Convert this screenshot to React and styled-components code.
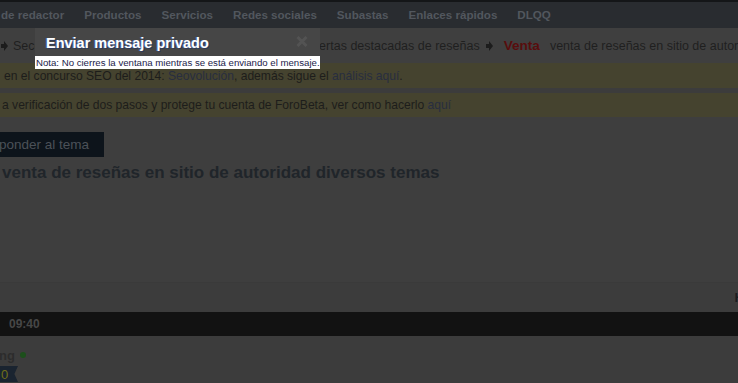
import React from "react";
import styled, { createGlobalStyle } from "styled-components";

const GlobalStyle = createGlobalStyle`
  html, body { margin: 0; padding: 0; }
  body {
    background: #3c3c3c;
    overflow: hidden;
    font-family: "Liberation Sans", Arial, sans-serif;
    width: 738px;
    height: 383px;
  }
`;

const Page = styled.div`
  position: relative;
  width: 738px;
  height: 383px;
  overflow: hidden;
  display: flex;
  flex-direction: column;
  background: #3c3c3c;
`;

const TopStrip = styled.div`
  height: 2px;
  background: #141618;
`;

const Nav = styled.nav`
  height: 26px;
  background: #292c30;
  display: flex;
  align-items: center;
  gap: 20px;
  padding-bottom: 1px;
  padding-left: 1px;
  box-sizing: border-box;
`;

const NavItem = styled.span`
  font-size: 11.6px;
  font-weight: bold;
  color: #52575e;
  white-space: nowrap;
`;

const Breadcrumb = styled.div`
  height: 35px;
  background: #3f3f3f;
  display: flex;
  align-items: center;
  padding-left: 1px;
  white-space: nowrap;
  font-size: 12.5px;
  color: #1f1f1f;
`;

const Crumb = styled.span`
  color: #1f1f1f;
`;

const Sep = styled.svg`
  width: 7px;
  height: 10px;
  margin: 0 ${(p) => p.$right ?? 7}px 0 ${(p) => p.$left ?? 6}px;
  flex: none;
`;

const Current = styled.strong`
  font-size: 13.6px;
  color: #580d0d;
  margin-right: 10px;
`;

const Notice = styled.div`
  height: ${(p) => p.$h}px;
  margin-top: ${(p) => p.$gap || 0}px;
  background: #45432f;
  display: flex;
  align-items: center;
  padding-left: ${(p) => p.$indent}px;
  font-size: 12.1px;
  color: #1d1d1b;
  white-space: nowrap;
`;

const NoticeLink = styled.span`
  color: #282e3f;
`;

const Content = styled.div`
  height: 166px;
  padding-top: 15px;
  box-sizing: border-box;
  background: #3e3e3e;
  border-bottom: 1px solid #3a3a3a;
  display: flex;
  flex-direction: column;
  align-items: flex-start;
`;

const ReplyButton = styled.div`
  width: 105px;
  height: 25px;
  background: #0d141b;
  color: #4b5158;
  font-size: 13.5px;
  display: flex;
  align-items: center;
  box-sizing: border-box;
  margin-left: -1px;
`;

const ThreadTitle = styled.h1`
  margin: 6px 0 0 2px;
  font-size: 17px;
  line-height: 20px;
  font-weight: bold;
  color: #20252a;
  white-space: nowrap;
`;

const PagerRow = styled.div`
  height: 29px;
  display: flex;
  align-items: center;
  justify-content: flex-end;
  background: #3c3c3c;
  overflow: hidden;
`;

const PagerText = styled.span`
  font-size: 13px;
  font-weight: bold;
  color: #1b1d21;
  margin-right: -6px;
`;

const PostBar = styled.div`
  height: 24px;
  background: #121212;
  display: flex;
  align-items: center;
  padding-left: 9px;
`;

const PostTime = styled.span`
  font-size: 12px;
  font-weight: bold;
  color: #474747;
`;

const Author = styled.div`
  padding-top: 12px;
  display: flex;
  flex-direction: column;
  gap: 3px;
`;

const AuthorName = styled.div`
  display: flex;
  align-items: center;
  gap: 5px;
  font-size: 13px;
  font-weight: bold;
  color: #2c2c2c;
  height: 15px;
  margin-left: -1px;
`;

const OnlineDot = styled.span`
  width: 6px;
  height: 6px;
  border-radius: 50%;
  background: #1c4f1b;
  margin-top: -2px;
`;

const Badge = styled.div`
  width: 18px;
  height: 16px;
  background: #1a2430;
  color: #706f1a;
  font-size: 13px;
  display: flex;
  align-items: center;
  padding-left: 1px;
  box-sizing: border-box;
  clip-path: polygon(0 0, 100% 0, 80% 50%, 100% 100%, 0 100%);
`;

/* Modal lying over the dimmed page */
const Modal = styled.div`
  position: absolute;
  left: 35px;
  top: 28px;
  width: 285px;
  display: flex;
  flex-direction: column;
`;

const ModalHeader = styled.div`
  height: 28px;
  background: #464646;
  display: flex;
  align-items: center;
  justify-content: space-between;
  padding: 0 12px 0 11px;
`;

const ModalTitle = styled.span`
  font-size: 14.5px;
  font-weight: bold;
  color: #ffffff;
  text-shadow: -1px 0 0 #4d6aa8, 1px 1px 0 #2c3a5c;
  margin-top: 2px;
`;

const Close = styled.svg`
  width: 12px;
  height: 11px;
  margin-top: -2px;
`;

const ModalNote = styled.div`
  height: 13px;
  background: #ffffff;
  font-size: 9.65px;
  line-height: 13px;
  color: #1a1a4a;
  white-space: nowrap;
  padding-left: 1px;
  overflow: hidden;
`;

const Diamond = ({ left, right }) => (
  <Sep viewBox="0 0 7 10" $left={left} $right={right}>
    <path d="M0 3 L3 3 L3 0 L7 5 L3 10 L3 7 L0 7 Z" fill="#1c1c1c" />
  </Sep>
);

export default function App() {
  return (
    <>
      <GlobalStyle />
      <Page>
        <TopStrip />
        <Nav>
          <NavItem>de redactor</NavItem>
          <NavItem>Productos</NavItem>
          <NavItem>Servicios</NavItem>
          <NavItem>Redes sociales</NavItem>
          <NavItem>Subastas</NavItem>
          <NavItem>Enlaces rápidos</NavItem>
          <NavItem>DLQQ</NavItem>
        </Nav>
        <Breadcrumb>
          <Diamond left={0} right={5} />
          <Crumb>Secciones de compra-venta</Crumb>
          <Diamond />
          <Crumb>Servicios de SEO</Crumb>
          <Diamond />
          <Crumb>Ofertas destacadas de reseñas</Crumb>
          <Diamond left={6} right={11} />
          <Current>Venta</Current>
          <Crumb>venta de reseñas en sitio de autoridad diversos temas</Crumb>
        </Breadcrumb>
        <Notice $h={25} $indent={4}>
          en el concurso SEO del 2014:&nbsp;<NoticeLink>Seovolución</NoticeLink>, además sigue el&nbsp;
          <NoticeLink>análisis aquí</NoticeLink>.
        </Notice>
        <Notice $h={24} $gap={5} $indent={2}>
          a verificación de dos pasos y protege tu cuenta de ForoBeta, ver como hacerlo&nbsp;
          <NoticeLink>aquí</NoticeLink>
        </Notice>
        <Content>
          <ReplyButton>ponder al tema</ReplyButton>
          <ThreadTitle>venta de reseñas en sitio de autoridad diversos temas</ThreadTitle>
        </Content>
        <PagerRow>
          <PagerText>H</PagerText>
        </PagerRow>
        <PostBar>
          <PostTime>09:40</PostTime>
        </PostBar>
        <Author>
          <AuthorName>
            ng <OnlineDot />
          </AuthorName>
          <Badge>0</Badge>
        </Author>
        <Modal>
          <ModalHeader>
            <ModalTitle>Enviar mensaje privado</ModalTitle>
            <Close viewBox="0 0 12 11">
              <path d="M1.5 1 L10.5 10 M10.5 1 L1.5 10" stroke="#535353" strokeWidth="3" />
            </Close>
          </ModalHeader>
          <ModalNote>Nota: No cierres la ventana mientras se está enviando el mensaje.</ModalNote>
        </Modal>
      </Page>
    </>
  );
}
